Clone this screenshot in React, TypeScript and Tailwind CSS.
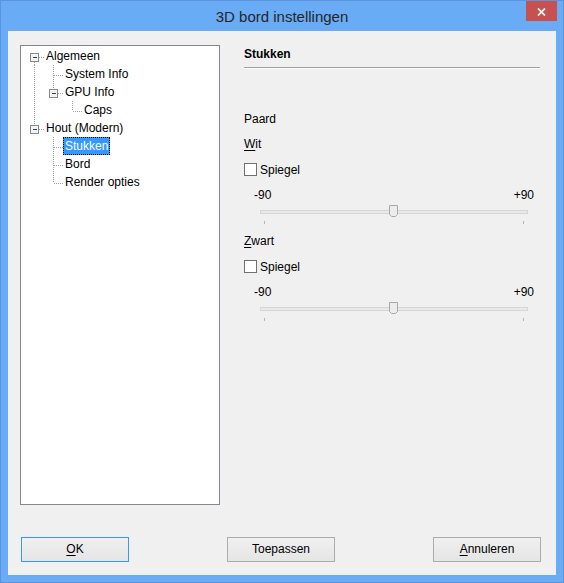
import React from 'react'

// Tree rows: vertical dotted segments per column [col, y1, y2]
type Seg = [number, number, number]

interface TreeRow {
  label: string
  level: number
  expander?: boolean
  selected?: boolean
  lines: Seg[]
}

const treeRows: TreeRow[] = [
  { label: 'Algemeen', level: 0, expander: true, lines: [[0, 15, 18]] },
  { label: 'System Info', level: 1, lines: [[0, 0, 18], [1, 0, 18]] },
  { label: 'GPU Info', level: 1, expander: true, lines: [[0, 0, 18], [1, 0, 6]] },
  { label: 'Caps', level: 2, lines: [[0, 0, 18], [2, 0, 10]] },
  { label: 'Hout (Modern)', level: 0, expander: true, lines: [[0, 0, 6]] },
  { label: 'Stukken', level: 1, selected: true, lines: [[1, 0, 18]] },
  { label: 'Bord', level: 1, lines: [[1, 0, 18]] },
  { label: 'Render opties', level: 1, lines: [[1, 0, 10]] },
]

const colX = (col: number) => 13 + col * 19

function TreeItem({ row }: { row: TreeRow }) {
  const gutter = 23 + row.level * 19
  const cx = colX(row.level)
  const hStart = row.expander ? cx + 5 : cx + 1

  return (
    <div className="flex h-[18px] items-stretch">
      <svg width={gutter} height={18} className="shrink-0" shapeRendering="crispEdges">
        {row.lines.map(([col, y1, y2], i) => (
          <line
            key={i}
            x1={colX(col) + 0.5}
            x2={colX(col) + 0.5}
            y1={y1}
            y2={y2}
            stroke="#a0a0a0"
            strokeDasharray="1 1"
          />
        ))}
        <line x1={hStart} x2={gutter} y1={10.5} y2={10.5} stroke="#a0a0a0" strokeDasharray="1 1" />
        {row.expander && (
          <>
            <rect x={cx - 3.5} y={6.5} width={8} height={8} fill="#f2f2f2" stroke="#8a8a8a" />
            <line x1={cx - 1.5} x2={cx + 3} y1={10.5} y2={10.5} stroke="#2a3f5c" />
          </>
        )}
      </svg>
      <span
        className={`px-px leading-[16px] border ${
          row.selected ? 'bg-[#3399ff] text-white border-dotted border-black' : 'border-transparent text-black'
        }`}
      >
        {row.label}
      </span>
    </div>
  )
}

// Windows 8 style trackbar with two end ticks
function Slider() {
  return (
    <>
      <div className="flex justify-between pl-[10px] pr-[6px] mt-[8px] h-[18px] leading-[18px]">
        <span>-90</span>
        <span>+90</span>
      </div>
      <svg width={296} height={21} className="block" shapeRendering="crispEdges">
        <rect x={16.5} y={6.5} width={267} height={3} fill="#e7eaea" stroke="#d6d6d6" />
        <path
          d="M145.5 1.5 H153.5 V10.5 L151.5 12.5 H147.5 L145.5 10.5 Z"
          fill="#ececec"
          stroke="#a8a8a8"
          shapeRendering="auto"
        />
        <rect x={20} y={17} width={1} height={3} fill="#b4b4b4" />
        <rect x={279} y={17} width={1} height={3} fill="#b4b4b4" />
      </svg>
    </>
  )
}

function Checkbox({ label }: { label: string }) {
  return (
    <div className="flex h-[16px] mt-[9px] items-start">
      <div className="mt-px w-[13px] h-[13px] border border-[#707070] bg-white" />
      <span className="ml-[3px] leading-[16px]">{label}</span>
    </div>
  )
}

function ColorGroup({ accel, rest }: { accel: string; rest: string }) {
  return (
    <>
      <div className="h-[18px] leading-[18px]">
        <span className="underline underline-offset-2">{accel}</span>
        {rest}
      </div>
      <Checkbox label="Spiegel" />
      <Slider />
    </>
  )
}

function Button({ children, isDefault }: { children: React.ReactNode; isDefault?: boolean }) {
  return (
    <button
      className={`w-[108px] h-[25px] border bg-gradient-to-b from-[#f0f0f0] to-[#e5e5e5] text-black text-[12px] leading-[23px] ${
        isDefault ? 'border-[#3c97f2]' : 'border-[#acacac]'
      }`}
    >
      {children}
    </button>
  )
}

export default function App() {
  return (
    <div className="relative w-[564px] h-[583px] border border-[#5b94dc] bg-[#6aabf5] font-['Liberation_Sans',Arial,sans-serif] text-[12px] text-black flex flex-col">
      {/* Title bar */}
      <div className="h-[30px] pt-[7px] text-center text-[15px] leading-[18px] text-[#262626]">
        3D bord instellingen
      </div>
      <div className="absolute top-0 right-[6px] w-[31px] h-[20px] bg-[#c75050] flex items-center justify-center">
        <svg width={9} height={8} viewBox="0 0 9 8" className="mt-px">
          <path d="M1 0.5 L8 7.5 M8 0.5 L1 7.5" stroke="#fff" strokeWidth={1.7} />
        </svg>
      </div>

      {/* Client area */}
      <div className="mx-[7px] w-[548px] h-[544px] bg-[#f0f0f0] flex flex-col">
        <div className="flex pt-[14px] pl-[12px]">
          {/* Tree view */}
          <div className="w-[200px] h-[460px] border border-[#828790] bg-white pt-px">
            {treeRows.map((row) => (
              <TreeItem key={row.label} row={row} />
            ))}
          </div>

          {/* Settings panel */}
          <div className="ml-[24px] w-[296px] flex flex-col">
            <div className="h-[18px] leading-[18px] font-bold">Stukken</div>
            <div className="mt-[4px] h-[2px] border-t border-[#a0a0a0] border-b border-b-white" />
            <div className="mt-[41px] h-[18px] leading-[18px]">Paard</div>
            <div className="mt-[7px]">
              <ColorGroup accel="W" rest="it" />
            </div>
            <div className="mt-[7px]">
              <ColorGroup accel="Z" rest="wart" />
            </div>
          </div>
        </div>

        {/* Dialog buttons */}
        <div className="flex mt-[32px] pl-[13px] gap-[98px]">
          <Button isDefault>
            <span className="underline underline-offset-2">O</span>K
          </Button>
          <Button>Toepassen</Button>
          <Button>
            <span className="underline underline-offset-2">A</span>nnuleren
          </Button>
        </div>
      </div>
    </div>
  )
}
